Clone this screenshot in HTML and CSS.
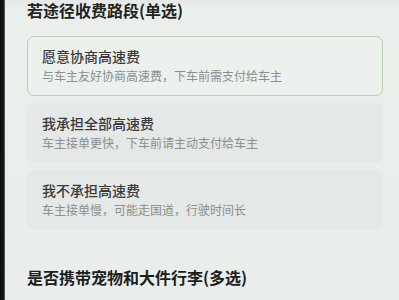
FILE: index.html
```html
<!DOCTYPE html>
<html lang="zh-CN">
<head>
<meta charset="utf-8">
<link rel="stylesheet" href="styles.css">
</head>
<body>
<div class="screen">
  <div class="bezel"></div>
  <main class="content">
    <h2 class="section-title">若途径收费路段(单选)</h2>
    <div class="options">
      <div class="option selected">
        <div class="option-title">愿意协商高速费</div>
        <div class="option-desc">与车主友好协商高速费，下车前需支付给车主</div>
      </div>
      <div class="option">
        <div class="option-title">我承担全部高速费</div>
        <div class="option-desc">车主接单更快，下车前请主动支付给车主</div>
      </div>
      <div class="option">
        <div class="option-title">我不承担高速费</div>
        <div class="option-desc">车主接单慢，可能走国道，行驶时间长</div>
      </div>
    </div>
    <h2 class="section-title second">是否携带宠物和大件行李(多选)</h2>
  </main>
</div>
</body>
</html>
```

FILE: styles.css
```css
html, body {
  margin: 0;
  padding: 0;
  height: 100%;
  overflow: hidden;
}
body {
  background: #e9eeeb;
  font-family: "Noto Sans CJK SC", "Noto Sans", sans-serif;
}
.screen {
  display: flex;
  height: 300px;
}
.bezel {
  width: 5px;
  flex: none;
  background: linear-gradient(to right, #0c0c0c 0, #1a1b1b 80%, #8a8e8c 100%);
}
.content {
  flex: 1;
  padding: 1px 16px 0 22px;
  background: linear-gradient(to bottom, #e4e8e6 0, #eaefec 10px, #e9eeeb 100%);
}
.section-title {
  margin: 0;
  font-size: 16px;
  line-height: 19px;
  font-weight: 700;
  color: #222423;
}
.section-title.second {
  margin-top: 35px;
  line-height: 24px;
  color: #1c1d1d;
}
.options {
  display: flex;
  flex-direction: column;
  gap: 7px;
  margin-top: 16px;
}
.option {
  height: 60px;
  box-sizing: border-box;
  padding: 10px 13px 0 14px;
  border-radius: 7px;
  background: #e4e8e6;
  border: 1px solid transparent;
}
.option.selected {
  background: #ecf1ed;
  border-color: #b6d2ae;
}
.option-title {
  font-size: 14px;
  line-height: 18px;
  font-weight: 500;
  color: #3a3c3b;
}
.option-desc {
  margin-top: 3px;
  font-size: 12px;
  line-height: 16px;
  color: #8b8f8d;
}
```
